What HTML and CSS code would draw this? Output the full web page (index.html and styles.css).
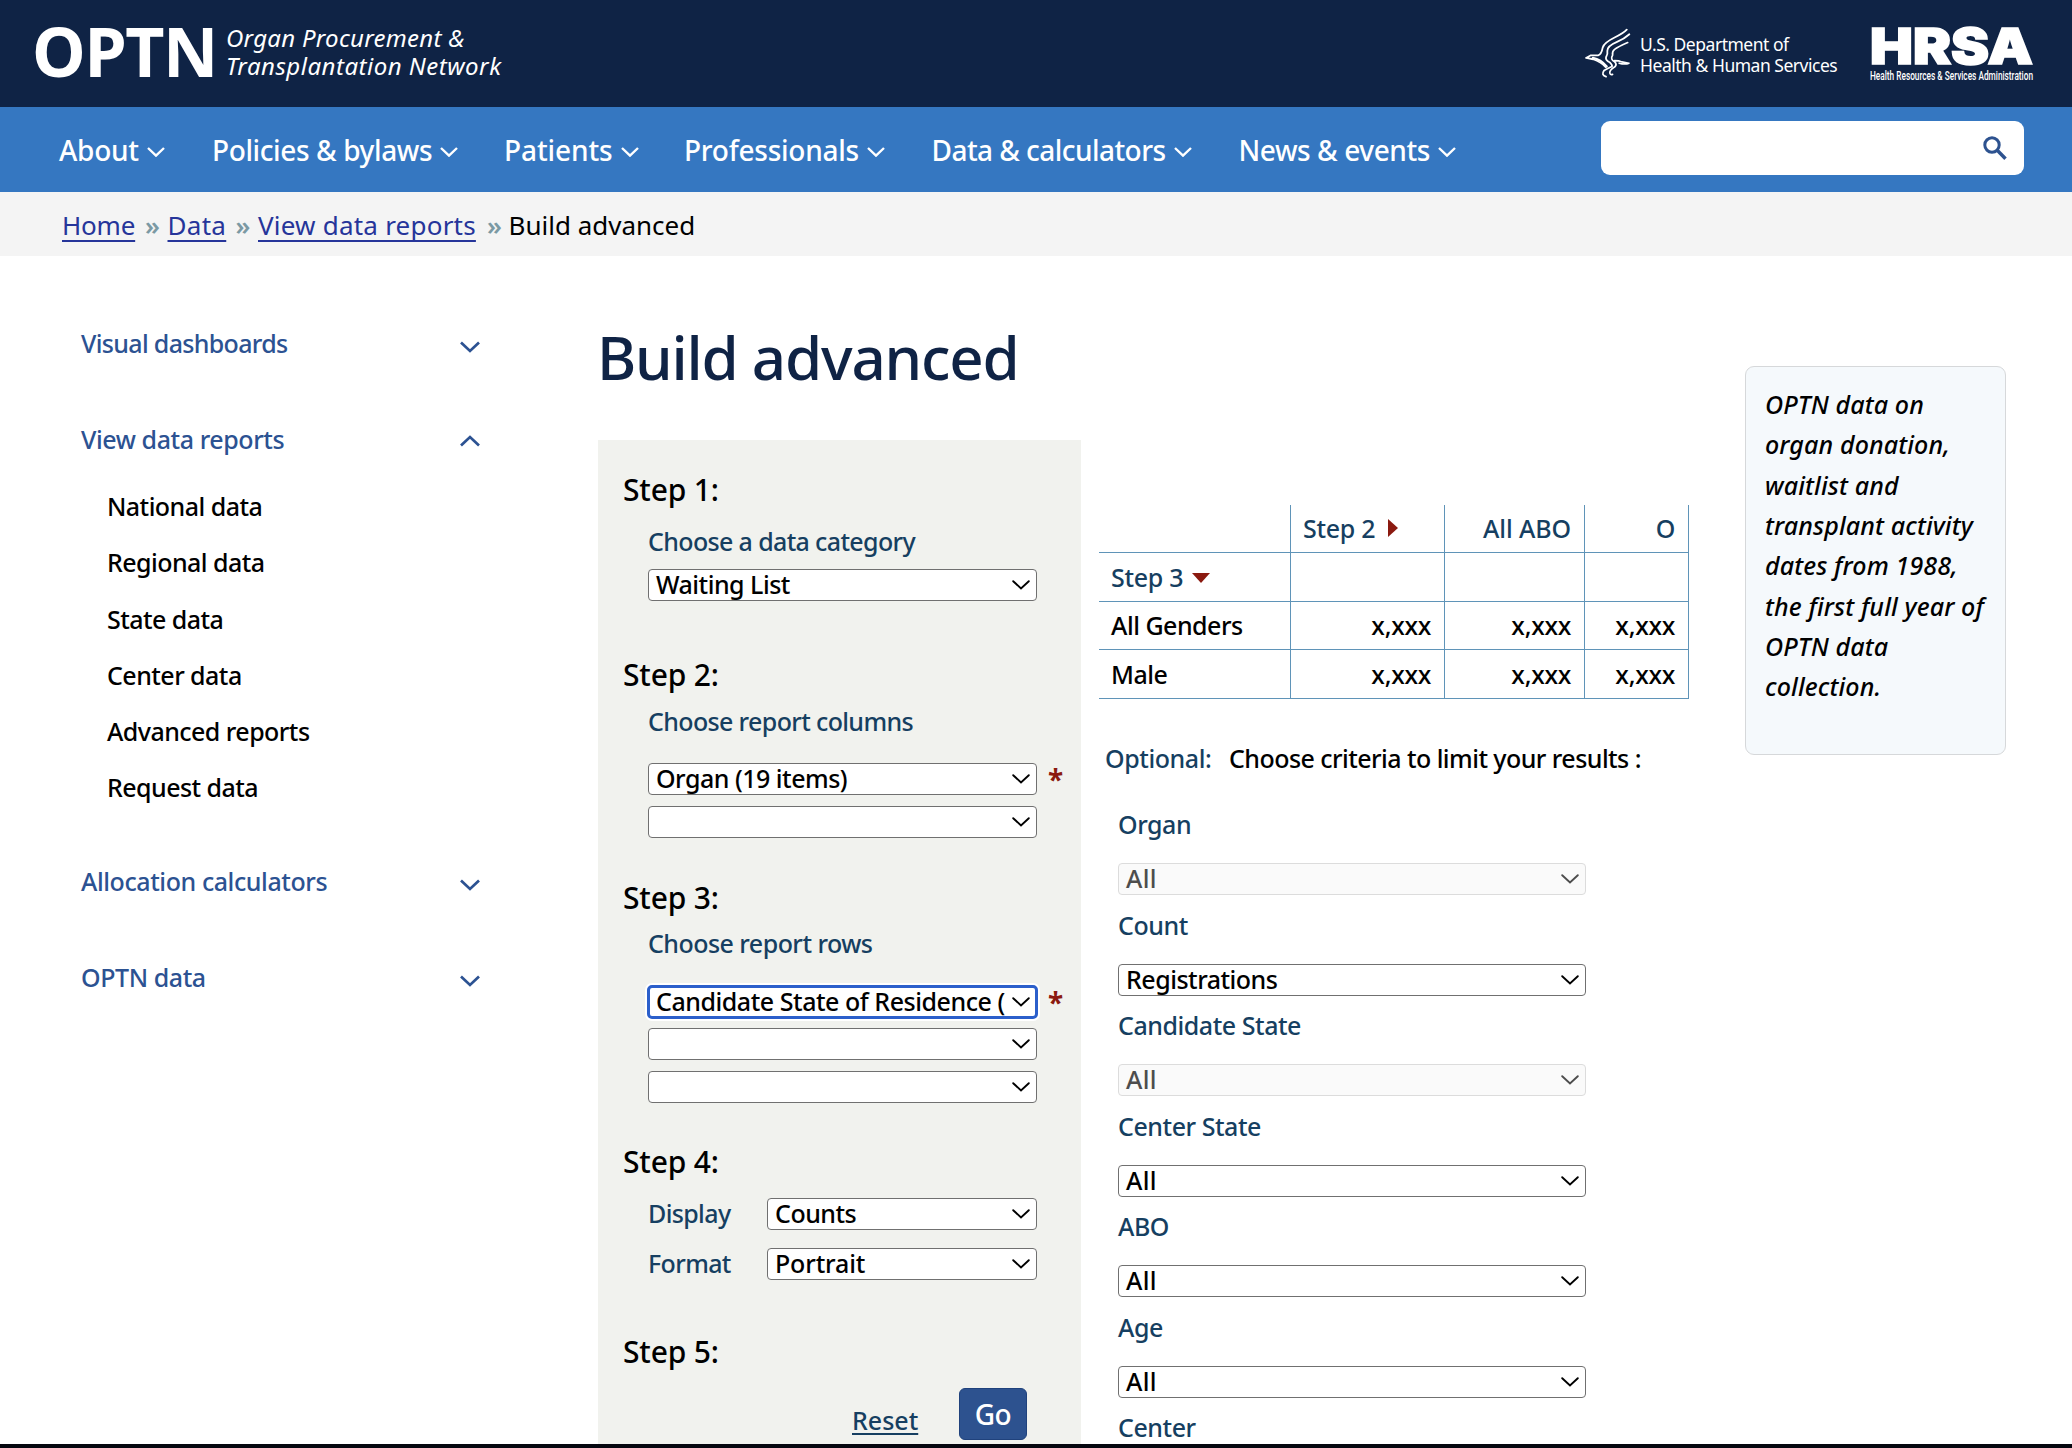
FILE: index.html
```html
<!DOCTYPE html>
<html lang="en">
<head>
<meta charset="utf-8">
<title>Build advanced - OPTN</title>
<link rel="stylesheet" href="styles.css">
</head>
<body>
<svg class="defs" width="0" height="0">
  <symbol id="chev" viewBox="0 0 18 10"><path d="M1.2 1.2 9 8.4l7.8-7.2" fill="none" stroke="currentColor" stroke-width="1.9" stroke-linecap="round"/></symbol>
  <symbol id="navchev" viewBox="0 0 18 10"><path d="M1 1l8 7.6L17 1" fill="none" stroke="currentColor" stroke-width="2.4"/></symbol>
  <symbol id="sidechev" viewBox="0 0 20 12"><path d="M1 1.5l9 8.5 9-8.5" fill="none" stroke="currentColor" stroke-width="2.7"/></symbol>
</svg>

<header class="top">
  <div class="brand">
    <span class="brand-name">OPTN</span>
    <span class="brand-tag">Organ Procurement &amp;<br><span class="wide">Transplantation Network</span></span>
  </div>
  <div class="partners">
    <svg class="hhs" viewBox="0 0 140 153" fill="none" stroke="#fff" stroke-linecap="round" stroke-linejoin="round">
      <path d="M127 4Q118 14 90 28 58 44 54 58q-4 22-14 24H18L3 90l22 4q24 8 38 24" stroke-width="5.5"/>
      <path d="M135 18Q120 32 96 42 68 54 68 68q2 10-4 20-2 10 12 16 8 8 6 12-14 6-24 12-10 14 6 19" stroke-width="5.5"/>
      <path d="M130 43Q100 56 90 64 82 70 84 82q-8 12 6 20 8 6 2 14-20 12-16 22 2 4 8 2M90 98q14 0 22 4l22 4q-12 5-30 0" stroke-width="5"/>
      <path d="M24 90q24 5 42 26" stroke-width="7"/>
    </svg>
    <span class="hhs-text">U.S. Department of<br>Health &amp; Human Services</span>
    <svg class="hrsa" viewBox="0 0 164 56">
      <text class="hrsa-name" x="0" y="37" textLength="163" lengthAdjust="spacingAndGlyphs">HRSA</text>
      <text class="hrsa-sub" x="0" y="53" textLength="163" lengthAdjust="spacingAndGlyphs">Health Resources &amp; Services Administration</text>
    </svg>
  </div>
</header>

<nav class="nav">
  <ul class="menu">
    <li>About<svg><use href="#navchev"/></svg></li>
    <li>Policies &amp; bylaws<svg><use href="#navchev"/></svg></li>
    <li>Patients<svg><use href="#navchev"/></svg></li>
    <li>Professionals<svg><use href="#navchev"/></svg></li>
    <li>Data &amp; calculators<svg><use href="#navchev"/></svg></li>
    <li>News &amp; events<svg><use href="#navchev"/></svg></li>
  </ul>
  <div class="search">
    <svg viewBox="0 0 24 24" fill="none" stroke="#2d528f"><circle cx="9" cy="9" r="7.2" stroke-width="3"/><path d="M14 14l8.5 8.8" stroke-width="3.4"/></svg>
  </div>
</nav>

<div class="crumbs">
  <a class="c1">Home</a><i>»</i><a class="c2">Data</a><i>»</i><a class="c3">View data reports</a><i>»</i><span>Build advanced</span>
</div>

<main class="page">
  <aside class="side">
    <div class="item"><span class="t1">Visual dashboards</span><svg><use href="#sidechev"/></svg></div>
    <div class="item"><span class="t2">View data reports</span><svg class="up"><use href="#sidechev"/></svg></div>
    <ul class="sub">
      <li>National data</li>
      <li>Regional data</li>
      <li>State data</li>
      <li>Center data</li>
      <li>Advanced reports</li>
      <li>Request data</li>
    </ul>
    <div class="item"><span class="t2">Allocation calculators</span><svg><use href="#sidechev"/></svg></div>
    <div class="item"><span class="t2">OPTN data</span><svg><use href="#sidechev"/></svg></div>
  </aside>

  <section class="content">
    <h1>Build advanced</h1>
    <div class="cols">
      <form class="panel">
        <h2>Step 1:</h2>
        <div class="label l1">Choose a data category</div>
        <div class="select s1">Waiting List<svg><use href="#chev"/></svg></div>

        <h2 class="h-2">Step 2:</h2>
        <div class="label l2">Choose report columns</div>
        <div class="row r2"><div class="select">Organ (19 items)<svg><use href="#chev"/></svg></div><span class="req">*</span></div>
        <div class="select s2"><svg><use href="#chev"/></svg></div>

        <h2 class="h-3">Step 3:</h2>
        <div class="label l3">Choose report rows</div>
        <div class="row r3"><div class="select focus"><span class="clip">Candidate State of Residence (</span><svg><use href="#chev"/></svg></div><span class="req">*</span></div>
        <div class="select s3"><svg><use href="#chev"/></svg></div>
        <div class="select s2"><svg><use href="#chev"/></svg></div>

        <h2 class="h-4">Step 4:</h2>
        <div class="row r4"><span class="label short">Display</span><div class="select">Counts<svg><use href="#chev"/></svg></div></div>
        <div class="row r5"><span class="label short">Format</span><div class="select wide">Portrait<svg><use href="#chev"/></svg></div></div>

        <h2 class="h-5">Step 5:</h2>
        <div class="actions"><a class="reset">Reset</a><span class="go">Go</span></div>
      </form>

      <div class="right">
        <div class="table">
          <div></div><div class="hd left">Step 2<svg class="tri-r" viewBox="0 0 10 18"><path d="M0 0l10 9-10 9z" fill="#8b1a10"/></svg></div><div class="hd wide">All ABO</div><div class="hd">O</div>
          <div class="hd left">Step 3<svg class="tri-d" viewBox="0 0 18 10"><path d="M0 0h18l-9 10z" fill="#8b1a10"/></svg></div><div></div><div></div><div></div>
          <div class="left">All Genders</div><div class="x">x,xxx</div><div class="x">x,xxx</div><div class="x">x,xxx</div>
          <div class="left">Male</div><div class="x">x,xxx</div><div class="x">x,xxx</div><div class="x">x,xxx</div>
        </div>
        <p class="optional"><span class="label">Optional:</span><span class="crit">Choose criteria to limit your results :</span></p>
        <div class="limits">
          <div class="limit"><div class="label">Organ</div><div class="select off"><span class="wide">All</span><svg><use href="#chev"/></svg></div></div>
          <div class="limit"><div class="label">Count</div><div class="select">Registrations<svg><use href="#chev"/></svg></div></div>
          <div class="limit"><div class="label">Candidate State</div><div class="select off"><span class="wide">All</span><svg><use href="#chev"/></svg></div></div>
          <div class="limit"><div class="label">Center State</div><div class="select"><span class="wide">All</span><svg><use href="#chev"/></svg></div></div>
          <div class="limit"><div class="label">ABO</div><div class="select"><span class="wide">All</span><svg><use href="#chev"/></svg></div></div>
          <div class="limit"><div class="label">Age</div><div class="select"><span class="wide">All</span><svg><use href="#chev"/></svg></div></div>
          <div class="limit"><div class="label">Center</div></div>
        </div>
      </div>
    </div>
  </section>

  <aside class="note">OPTN data on organ donation, waitlist and transplant activity dates from 1988, the first full year of OPTN data collection.</aside>
</main>
<footer class="edge"></footer>
</body>
</html>
```
FILE: styles.css
```css
* { box-sizing: border-box; }
body {
  margin: 0;
  width: 2072px;
  height: 1448px;
  overflow: hidden;
  display: flex;
  flex-direction: column;
  background: #fff;
  color: #000;
  font: 500 25px/34px "Noto Sans", "Open Sans", sans-serif;
  letter-spacing: -0.5px;
}
ul { list-style: none; margin: 0; padding: 0; }
svg { display: block; flex: none; }
.defs { display: none; }

/* header */
.top {
  height: 107px;
  flex: none;
  background: #0f2345;
  color: #fff;
  display: flex;
  justify-content: space-between;
  padding: 0 38px 0 32px;
}
.brand { display: flex; }
.brand-name { font-weight: 700; font-size: 68px; line-height: 102px; letter-spacing: -1.4px; width: 194px; }
.brand-tag { font-style: italic; font-weight: 400; font-size: 24px; line-height: 27.5px; letter-spacing: 0.27px; padding-top: 24px; white-space: nowrap; }
.brand-tag .wide { letter-spacing: 0.5px; }
.partners { display: flex; }
.hhs { width: 46px; height: 51px; margin: 28px 9px 0 0; }
.hhs-text { width: 230px; font-weight: 400; font-size: 17.5px; line-height: 21px; letter-spacing: -0.48px; padding-top: 34px; white-space: nowrap; }
.hrsa { width: 164px; height: 56px; margin-top: 27px; overflow: visible; }
.hrsa-name { font: 900 50px Inter, sans-serif; letter-spacing: 0; fill: #fff; stroke: #fff; stroke-width: 1.6px; }
.hrsa-sub { font: 500 12.6px Roboto, sans-serif; letter-spacing: 0; fill: #fff; }

/* navigation */
.nav {
  height: 85px;
  flex: none;
  background: #3577c1;
  color: #fff;
  display: flex;
  justify-content: space-between;
  padding: 0 48px 0 59px;
}
.menu { display: grid; grid-template-columns: 153px 292px 180px 247.5px 307px 260px; font-size: 28px; line-height: 86px; }
.menu li { display: flex; white-space: nowrap; letter-spacing: -0.25px; }
.menu li:nth-child(2) { letter-spacing: -0.39px; }
.menu li:nth-child(3) { letter-spacing: -0.1px; }
.menu li:nth-child(5) { letter-spacing: -0.55px; }
.menu li:nth-child(6) { letter-spacing: -0.42px; }
.menu svg { width: 18px; height: 10px; margin: 40px 0 0 8px; }
.search { width: 423px; height: 54px; margin-top: 14px; background: #fff; border-radius: 9px; display: flex; justify-content: flex-end; padding: 15px 17px 0 0; }
.search svg { width: 24px; height: 24px; }

/* breadcrumb */
.crumbs {
  height: 64px;
  flex: none;
  background: #f4f4f4;
  display: flex;
  gap: 10px;
  padding: 3px 0 0 62px;
  font-weight: 400;
  font-size: 26px;
  line-height: 60px;
  letter-spacing: 0;
  white-space: nowrap;
}
.crumbs a { color: #26359a; text-decoration: underline; text-decoration-thickness: 1.5px; text-underline-offset: 5px; text-decoration-skip-ink: none; }
.crumbs i { font-style: normal; font-weight: 600; color: #7b99a3; width: 12.5px; }
.crumbs .c1 { width: 73px; letter-spacing: -0.2px; }
.crumbs .c2 { width: 58px; letter-spacing: 0.3px; }
.crumbs .c3 { width: 219px; letter-spacing: 0.22px; }
.crumbs span { margin-left: -1px; }

/* page columns */
.page { height: 1188px; flex: none; display: flex; align-items: flex-start; overflow: hidden; }
.side { width: 598px; padding: 70px 118px 0 81px; flex: none; display: flex; flex-direction: column; gap: 62px; }
.item { color: #2c5292; display: flex; justify-content: space-between; height: 34px; }
.item .t1 { letter-spacing: -0.67px; }
.item .t2 { letter-spacing: -0.42px; }
.item svg { width: 20px; height: 12px; margin-top: 15px; }
.item .up { transform: scaleY(-1); margin-top: 13px; }
.sub { padding-left: 26px; margin: -29px 0 -2px; display: flex; flex-direction: column; gap: 22.3px; letter-spacing: -0.54px; }

.content { width: 1147px; flex: none; padding-top: 60px; }
h1 { margin: 1px 0 43px -1px; color: #0f2345; font-weight: 500; font-size: 60px; line-height: 80px; letter-spacing: -1.2px; }
.cols { display: flex; align-items: flex-start; }

/* step form */
.panel { width: 483px; height: 1010px; flex: none; background: #f1f2ee; padding: 29px 0 0 25px; }
h2 { margin: 0; font-weight: 500; font-size: 30px; line-height: 40px; height: 40px; padding-top: 1px; letter-spacing: -0.15px; }
.h-2 { margin-top: 53px; }
.h-3 { margin-top: 39px; }
.h-4 { margin-top: 38px; }
.h-5 { margin-top: 51px; }
.label { color: #163f61; white-space: nowrap; }
.panel .label { margin-left: 25px; line-height: 32px; letter-spacing: -0.64px; }
.panel .l1 { margin-top: 16px; }
.panel .l2 { margin-top: 11px; }
.panel .l3 { margin-top: 10px; letter-spacing: -0.54px; }
.select {
  height: 32px;
  width: 389px;
  border: 1px solid #707070;
  border-radius: 4px;
  background: #fff;
  line-height: 28px;
  padding: 0 6px 0 7px;
  display: flex;
  justify-content: space-between;
  white-space: nowrap;
}
.select svg { width: 18px; height: 10px; margin: 10px 0 0 auto; }
.select .wide { letter-spacing: 0.3px; }
.panel .select { margin-left: 25px; }
.panel .s1 { margin-top: 12px; }
.panel .s2 { margin-top: 11px; }
.panel .s3 { margin-top: 10px; }
.row { display: flex; }
.r2 { margin-top: 26px; }
.r3 { margin-top: 27px; }
.r4 { margin-top: 17px; }
.r5 { margin-top: 18px; }
.req { color: #8b1a10; font-weight: 700; font-size: 28px; line-height: 32px; height: 32px; margin-left: 11px; }
.panel .focus { border-color: #2b5fcb; outline: 3px solid #2b5fcb; outline-offset: -2px; box-shadow: 0 0 0 3px #fff; }
.clip { width: 350px; overflow: hidden; letter-spacing: -0.46px; }
.panel .short { width: 94px; line-height: 30px; }
.row .short + .select { width: 270px; }
.row .select.wide { letter-spacing: -0.15px; }
.actions { display: flex; margin-top: 17px; padding-left: 229px; }
.reset { width: 107px; color: #163f61; line-height: 65px; height: 52px; letter-spacing: 0; text-decoration: underline; text-decoration-thickness: 1.5px; text-underline-offset: 3px; }
.go { width: 68px; height: 52px; border: 1px solid #20427c; border-radius: 6px; background: #2d528f; color: #fff; font-size: 28px; line-height: 51px; text-align: center; letter-spacing: -0.6px; }

/* example table and limits */
.right { width: 640px; padding: 65px 0 0 18px; }
.table { display: grid; grid-template-columns: 192px 154px 140px 104px; grid-template-rows: 48px 49px 48px 49px; }
.table > div { border-right: 1px solid #5f94b8; border-bottom: 1px solid #5f94b8; display: flex; justify-content: flex-end; align-items: center; padding: 0 13px 1px 12px; }
.table .left { justify-content: flex-start; }
.table .hd { color: #163f61; letter-spacing: -0.3px; }
.table .hd.wide { letter-spacing: -0.1px; }
.table .x { letter-spacing: -0.3px; }
.tri-r { width: 10px; height: 18px; margin-left: 13px; }
.tri-d { width: 18px; height: 10px; margin: 2px 0 0 9px; }
.optional { display: flex; margin: 42px 0 32px 6px; letter-spacing: -0.55px; white-space: nowrap; }
.optional .label { width: 124px; letter-spacing: -0.43px; }
.limits { padding-left: 19px; }
.limit { height: 100.5px; }
.limit .label { letter-spacing: -0.46px; }
.limit .select { width: 468px; margin-top: 22px; }
.off { border-color: #dcdcdc; background: #fafafa; color: #4d4d4d; }

/* side note */
.note { width: 261px; height: 389px; margin-top: 110px; border: 1px solid #d6d8da; border-radius: 9px; background: #f5f9fc; padding: 17px 8px 0 19px; font-style: italic; line-height: 40.35px; letter-spacing: 0.12px; }
.edge { height: 4px; flex: none; background: #05060f; }
```
